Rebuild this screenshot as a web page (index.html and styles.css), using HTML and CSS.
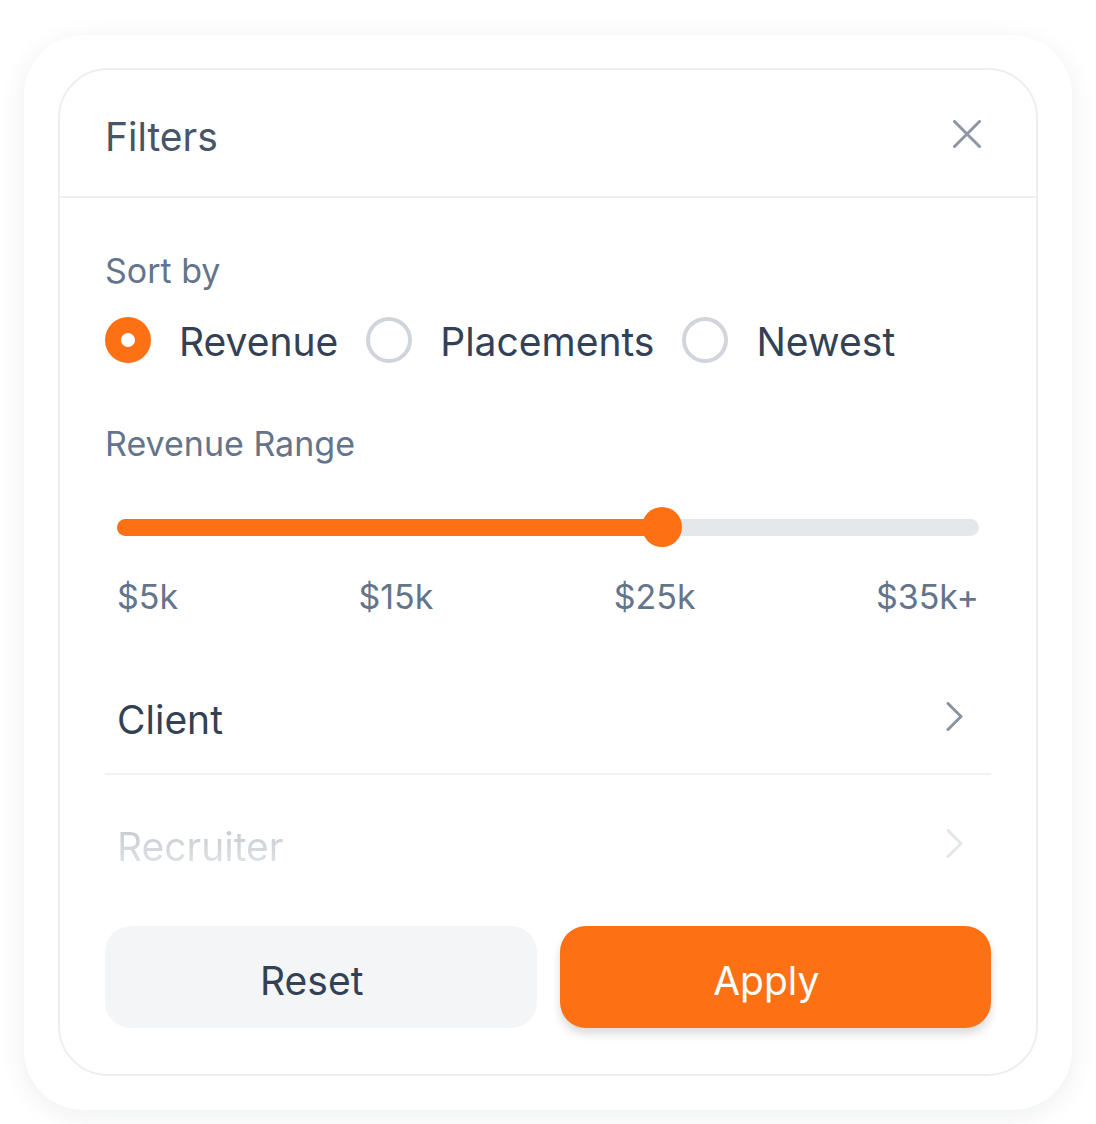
FILE: index.html
```html
<!DOCTYPE html>
<html lang="en">
<head>
    <meta charset="UTF-8">
    <meta name="viewport" content="width=device-width, initial-scale=1.0">
    <title>Filters</title>
    <link rel="stylesheet" href="styles.css">
</head>
<body>
    <div class="sheet">
        <div class="panel">
            <header class="panel-head">
                <h2 class="panel-title">Filters</h2>
                <button class="close-btn" aria-label="Close">
                    <svg width="28" height="28" viewBox="0 0 28 28"><path d="M1.5 1.5 L26.5 26.5 M26.5 1.5 L1.5 26.5" stroke="#8e96a3" stroke-width="3" stroke-linecap="round" fill="none"/></svg>
                </button>
            </header>

            <div class="panel-body">
                <p class="section-label">Sort by</p>
                <div class="radio-group">
                    <label class="radio-item"><span class="radio checked"></span>Revenue</label>
                    <label class="radio-item"><span class="radio"></span>Placements</label>
                    <label class="radio-item"><span class="radio"></span>Newest</label>
                </div>

                <p class="section-label range-label">Revenue Range</p>
                <div class="slider">
                    <div class="track">
                        <div class="fill" style="width: 63.2%"></div>
                        <span class="thumb" style="left: 63.2%"></span>
                    </div>
                </div>
                <div class="ticks">
                    <span>$5k</span>
                    <span>$15k</span>
                    <span>$25k</span>
                    <span>$35k+</span>
                </div>

                <div class="row">
                    <span>Client</span>
                    <svg width="18" height="29" viewBox="0 0 18 29"><path d="M2 1.5 L15 14.5 L2 27.5" stroke="#8b93a0" stroke-width="3" stroke-linecap="round" stroke-linejoin="round" fill="none"/></svg>
                </div>
                <div class="row row-faded">
                    <span class="faded-text">Recruiter</span>
                    <svg width="18" height="29" viewBox="0 0 18 29"><path d="M2 1.5 L15 14.5 L2 27.5" stroke="#e3e6ea" stroke-width="3" stroke-linecap="round" stroke-linejoin="round" fill="none"/></svg>
                </div>

                <div class="actions">
                    <button class="btn btn-reset">Reset</button>
                    <button class="btn btn-apply">Apply</button>
                </div>
            </div>
        </div>
    </div>
</body>
</html>
```

FILE: styles.css
```css
* {
    margin: 0;
    padding: 0;
    box-sizing: border-box;
}
body {
    background: #ffffff;
    font-family: Inter, "Noto Sans", sans-serif;
}
.sheet {
    margin: 35px 24px 14px;
    padding: 33px 34px 34px;
    background: #ffffff;
    border-radius: 60px;
    box-shadow: 0 6px 28px rgba(15, 23, 42, 0.07);
}
.panel {
    border: 2px solid #eceef1;
    border-radius: 50px;
    background: #ffffff;
}
.panel-head {
    height: 128px;
    border-bottom: 2px solid #eceef1;
    display: flex;
    align-items: center;
    justify-content: space-between;
    padding: 2px 55px 0 45px;
}
.panel-title {
    font-size: 39px;
    font-weight: 400;
    color: #475569;
    padding-top: 4px;
}
.close-btn {
    border: none;
    background: none;
    display: flex;
}
.panel-body {
    padding: 51px 45px 46px;
}
.section-label {
    font-size: 34px;
    line-height: 44px;
    color: #64748b;
}
.radio-group {
    display: flex;
    gap: 28px;
    margin-top: 26px;
}
.radio-item {
    display: flex;
    align-items: center;
    gap: 28px;
    font-size: 39px;
    color: #334155;
    line-height: 46px;
}
.radio {
    width: 46px;
    height: 46px;
    border-radius: 50%;
    border: 4px solid #d1d5db;
    flex-shrink: 0;
    margin-top: -5px;
}
.radio.checked {
    border: 16px solid #fd7014;
    background: #ffffff;
}
.range-label {
    margin-top: 57px;
}
.slider {
    margin: 41px 12px 0;
    height: 40px;
    display: flex;
    align-items: center;
}
.track {
    position: relative;
    flex: 1;
    height: 17px;
    border-radius: 9px;
    background: #e5e7eb;
}
.fill {
    height: 100%;
    border-radius: 9px;
    background: #fd7014;
}
.thumb {
    position: absolute;
    top: 50%;
    width: 40px;
    height: 40px;
    margin: -20px 0 0 -20px;
    border-radius: 50%;
    background: #fd7014;
}
.ticks {
    display: flex;
    justify-content: space-between;
    margin: 28px 12px 0;
    font-size: 34px;
    line-height: 44px;
    color: #64748b;
}
.row {
    display: flex;
    align-items: center;
    justify-content: space-between;
    height: 110px;
    margin-top: 46px;
    padding: 0 27px 0 12px;
    border-bottom: 2px solid #f1f2f4;
    font-size: 39px;
    color: #334155;
}
.row svg {
    margin-top: -6px;
}
.row-faded {
    height: 138px;
    margin-top: 0;
    border-bottom: none;
    padding-top: 4px;
}
.faded-text {
    color: #ccd0d6;
    background: linear-gradient(#c3c8ce, #e2e5e9);
    -webkit-background-clip: text;
    background-clip: text;
    -webkit-text-fill-color: transparent;
}
.actions {
    display: grid;
    grid-template-columns: 1fr 1fr;
    gap: 23px;
    margin-top: 13px;
}
.btn {
    height: 102px;
    border: none;
    border-radius: 26px;
    padding: 6px 18px 0 0;
    font-family: Inter, "Noto Sans", sans-serif;
    font-size: 39px;
}
.btn-reset {
    background: #f4f5f7;
    color: #334155;
}
.btn-apply {
    background: #fd7014;
    color: #ffffff;
    box-shadow: 0 6px 10px rgba(0, 0, 0, 0.14);
}
```
